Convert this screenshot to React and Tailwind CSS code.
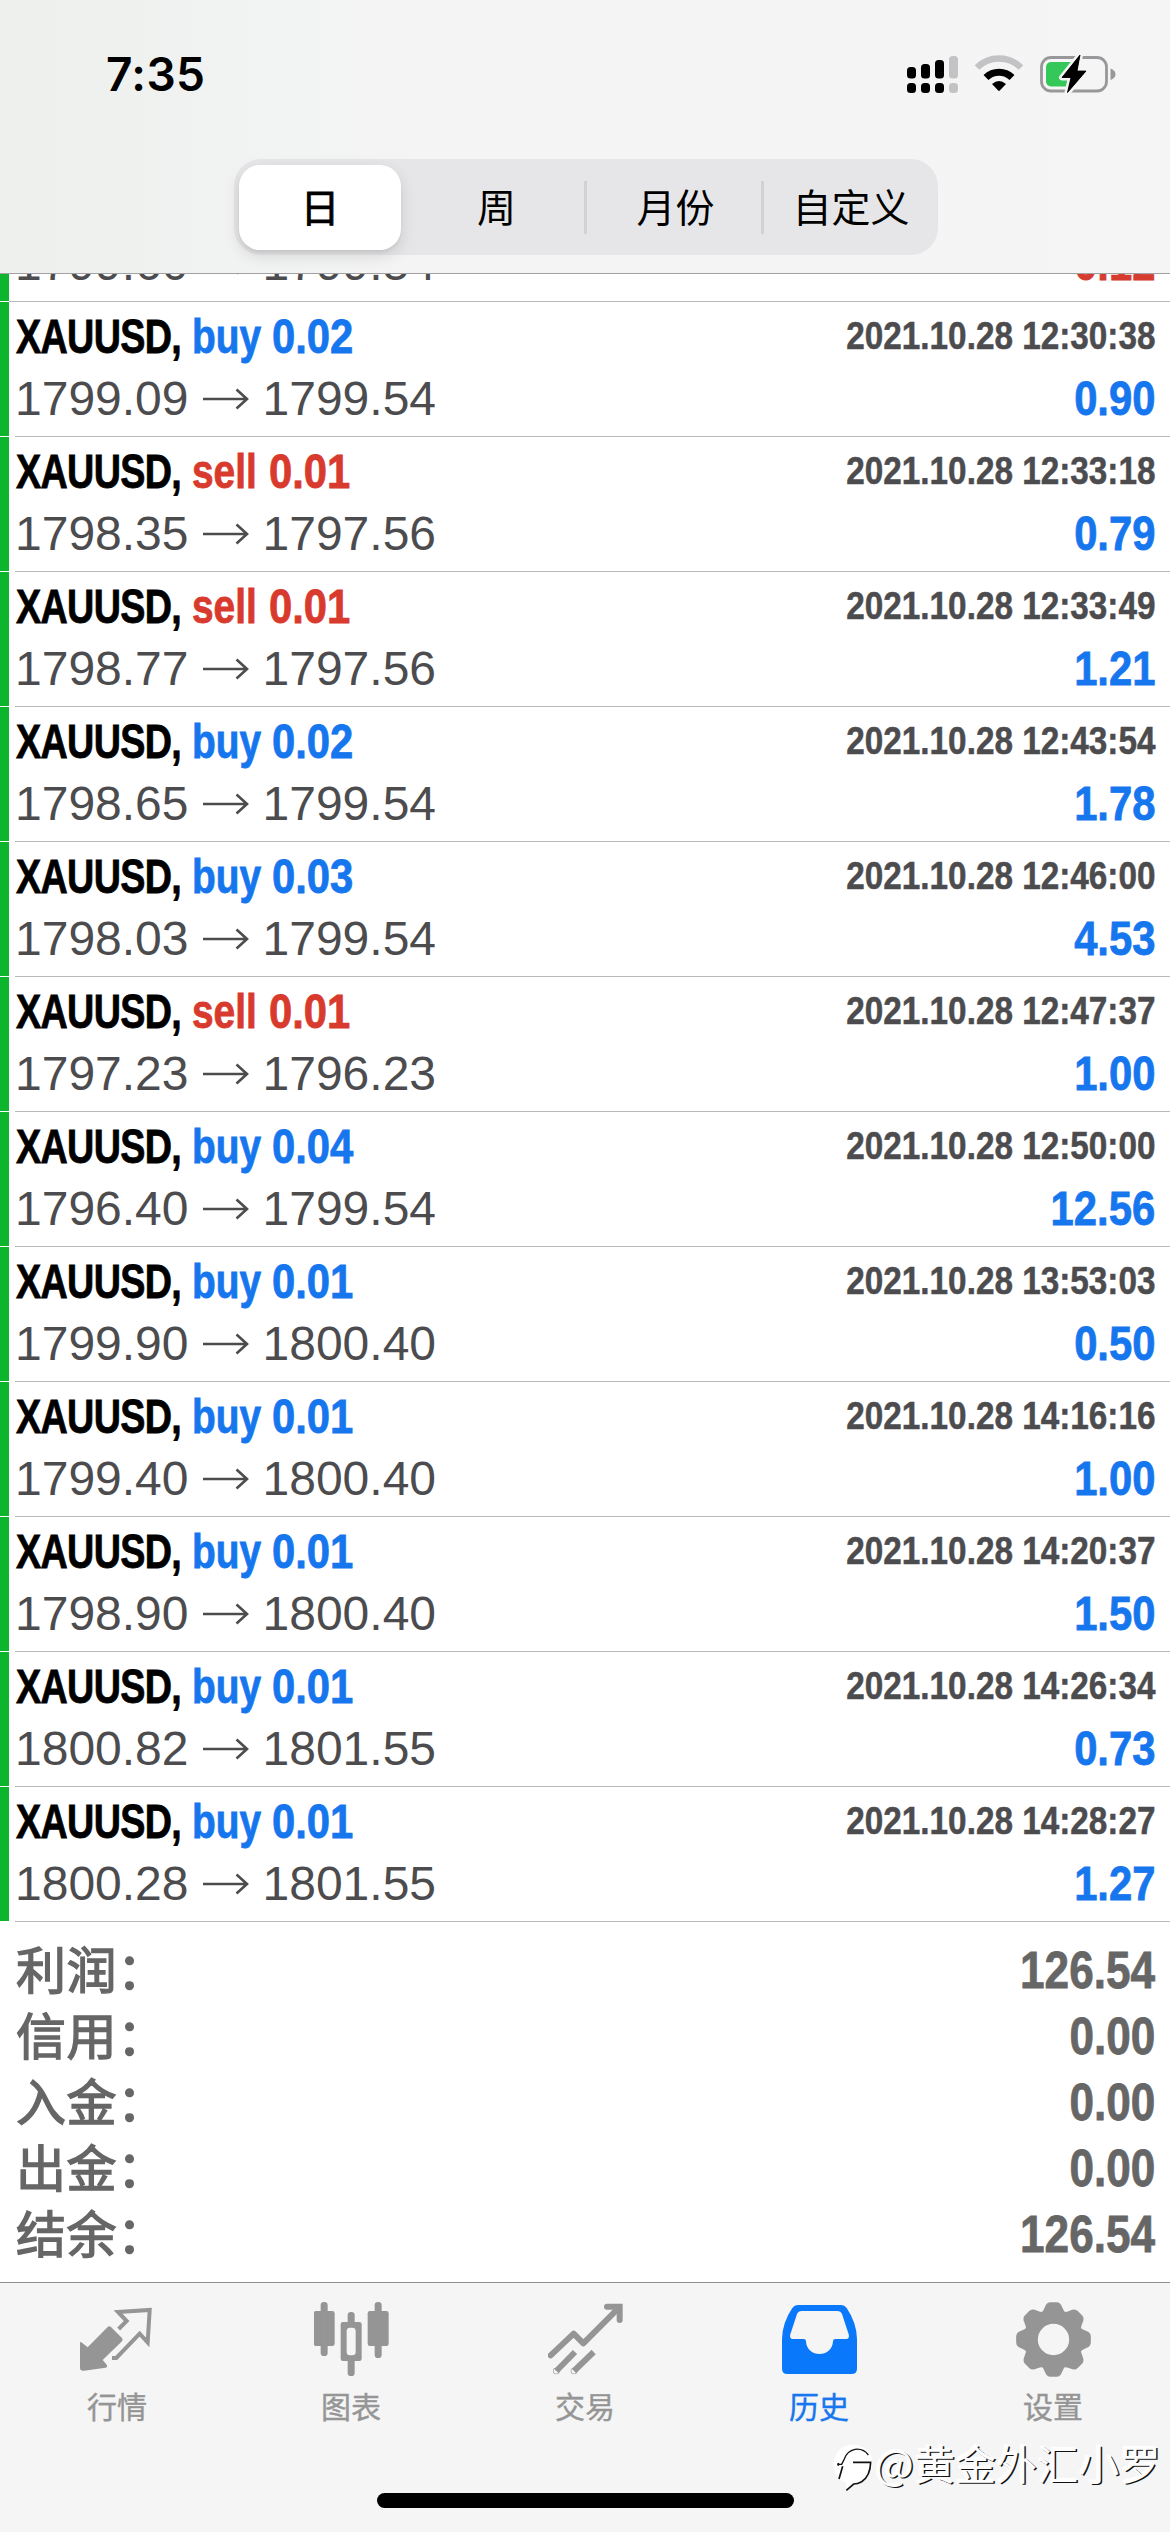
const TRADES = [
  ['buy', '0.02', '2021.10.28 12:30:38', '1799.09', '1799.54', '0.90'],
  ['sell', '0.01', '2021.10.28 12:33:18', '1798.35', '1797.56', '0.79'],
  ['sell', '0.01', '2021.10.28 12:33:49', '1798.77', '1797.56', '1.21'],
  ['buy', '0.02', '2021.10.28 12:43:54', '1798.65', '1799.54', '1.78'],
  ['buy', '0.03', '2021.10.28 12:46:00', '1798.03', '1799.54', '4.53'],
  ['sell', '0.01', '2021.10.28 12:47:37', '1797.23', '1796.23', '1.00'],
  ['buy', '0.04', '2021.10.28 12:50:00', '1796.40', '1799.54', '12.56'],
  ['buy', '0.01', '2021.10.28 13:53:03', '1799.90', '1800.40', '0.50'],
  ['buy', '0.01', '2021.10.28 14:16:16', '1799.40', '1800.40', '1.00'],
  ['buy', '0.01', '2021.10.28 14:20:37', '1798.90', '1800.40', '1.50'],
  ['buy', '0.01', '2021.10.28 14:26:34', '1800.82', '1801.55', '0.73'],
  ['buy', '0.01', '2021.10.28 14:28:27', '1800.28', '1801.55', '1.27'],
];

const TOTALS = [
  ['利润：', '126.54'],
  ['信用：', '0.00'],
  ['入金：', '0.00'],
  ['出金：', '0.00'],
  ['结余：', '126.54'],
];

const CJK = "font-['Noto_Sans_CJK_SC',sans-serif]";

function StatusIcons() {
  return (
    <svg width="210" height="44" viewBox="906 52 210 44" fill="none">
      <g fill="#000">
        <rect x="907" y="67" width="9" height="11.5" rx="3.5" />
        <rect x="921" y="64" width="9" height="14.5" rx="3.5" />
        <rect x="935" y="60" width="9" height="18.5" rx="3.5" />
        <rect x="907" y="83" width="9" height="10" rx="3.5" />
        <rect x="921" y="83" width="9" height="10" rx="3.5" />
        <rect x="935" y="83" width="9" height="10" rx="3.5" />
      </g>
      <g fill="#c3c3c5">
        <rect x="949" y="56" width="9" height="22.5" rx="3.5" />
        <rect x="949" y="83" width="9" height="10" rx="3.5" />
      </g>
      <path d="M977 67.5A31.500 31.500 0 0 1 1021 67.500" stroke="#c3c3c5" strokeWidth="6.500" />
      <path d="M986 77.500A18.500 18.500 0 0 1 1012 77.500" stroke="#000" strokeWidth="7" />
      <path d="M992 84Q999 78 1006 84L999.800 90.600Q999 91.300 998.200 90.600Z" fill="#000" />
      <rect x="1041.500" y="57.500" width="65" height="33.500" rx="9.500" stroke="#98989a" strokeWidth="2.800" />
      <path d="M1110.500 68.500C1113.500 69.500 1115.500 71.500 1115.500 74.300S1113.500 79 1110.500 80Z" fill="#98989a" />
      <rect x="1046" y="62" width="30" height="24.500" rx="5" fill="#34c759" />
      <path
        d="M1080 55L1062 77.500H1071L1067.500 92.500L1086 71H1077Z"
        fill="#000"
        stroke="#f5f5f6"
        strokeWidth="6"
        strokeLinejoin="round"
        paintOrder="stroke"
      />
      <path d="M1080 55L1062 77.500H1071L1067.500 92.500L1086 71H1077Z" fill="#000" stroke="#000" strokeWidth="0.8" strokeLinejoin="round" />
    </svg>
  );
}

function Header() {
  return (
    <header className="flex h-[274px] shrink-0 flex-col border-b border-[#a2a2a4] bg-linear-to-r from-[#edf0ed] via-[#f4f4f5] via-35% to-[#f5f5f6]">
      <div className="flex h-[159px] items-center justify-between pr-[54px] pl-[106px] pb-[11px]">
        <span className="font-['Inter',sans-serif] text-[46px] leading-none font-semibold tracking-[0.4px] text-black">7:35</span>
        <StatusIcons />
      </div>
      <div className={`ml-[234px] flex h-[96px] w-[704px] items-center rounded-[27px] bg-[#e6e6e8] px-[5px] text-[39px] text-black ${CJK}`}>
        <div className="flex h-[85px] w-[162px] items-center justify-center rounded-[21px] bg-white shadow-[0_6px_16px_rgba(0,0,0,0.12),0_2px_3px_rgba(0,0,0,0.06)] [-webkit-text-stroke:0.8px_#000]">
          <span className="-mt-1 leading-none">日</span>
        </div>
        <div className="flex h-[53px] w-[186px] items-center justify-center border-r-[3px] border-[#d2d2d4] pl-2">
          <span className="-mt-1 leading-none">周</span>
        </div>
        <div className="flex h-[53px] w-[177px] items-center justify-center border-r-[3px] border-[#d2d2d4] pl-[3px]">
          <span className="-mt-1 leading-none">月份</span>
        </div>
        <div className="flex h-[53px] flex-1 items-center justify-center pl-[5px]">
          <span className="-mt-1 leading-none">自定义</span>
        </div>
      </div>
    </header>
  );
}

function Arrow() {
  return (
    <svg className="mx-[13px] shrink-0" width="48" height="48" viewBox="0 5 48 48" fill="none" stroke="#4c4c4f" strokeWidth="2.600">
      <path d="M1 29H45M34.500 19.500L45 29L34.500 38.500" />
    </svg>
  );
}

function PriceLine({ open, close, profit }) {
  const color = profit.startsWith('-')
    ? 'text-[#d63b30] [-webkit-text-stroke:0.8px_#d63b30]'
    : 'text-[#1676ee] [-webkit-text-stroke:0.8px_#1676ee]';
  return (
    <div className="flex h-[54px] w-full items-center justify-between pr-[15px] pl-[5px] text-[48px] leading-none text-[#4c4c4f]">
      <div className="flex items-center">
        <span>{open}</span>
        <Arrow />
        <span>{close}</span>
      </div>
      <span className={`origin-right scale-x-[0.87] font-bold ${color}`}>{profit}</span>
    </div>
  );
}

function TradeRow({ trade }) {
  const [side, lots, time, open, close, profit] = trade;
  const buy = side === 'buy';
  return (
    <div className="flex h-[135px]">
      <div className="mb-px w-[9px] bg-[#0cb52c]" />
      <div className="ml-[6px] flex flex-1 flex-col border-b border-[#b9b9bb]">
        <div className="flex h-[70px] items-center justify-between pr-[15px] text-[48px] leading-none font-bold">
          <div
            className={`flex whitespace-nowrap ${
              buy
                ? 'text-[#1676ee] [-webkit-text-stroke:0.8px_#1676ee]'
                : 'text-[#d93a2e] [-webkit-text-stroke:0.8px_#d93a2e]'
            }`}
          >
            <span className="w-[177px] pl-px text-black [-webkit-text-stroke:0.8px_#000]">
              <span className="inline-block origin-left scale-x-[0.785] tracking-[-0.8px]">XAUUSD,</span>
            </span>
            <span className={buy ? 'w-[80px]' : 'w-[77px]'}>
              <span className="inline-block origin-left scale-x-[0.81]">{side}</span>
            </span>
            <span className="inline-block w-[82px] origin-left scale-x-[0.87]">{lots}</span>
          </div>
          <span className="-mt-[2px] origin-right scale-x-[0.865] text-[38.500px] text-[#4c4c4f] [-webkit-text-stroke:0.5px_#4c4c4f]">{time}</span>
        </div>
        <div className="-ml-[5px]">
          <PriceLine open={open} close={close} profit={profit} />
        </div>
      </div>
    </div>
  );
}

function QuotesIcon() {
  return (
    <svg width="75" height="75" viewBox="240 96 225 225" fill="#959595">
      <path d="M240 218Q241 214 246 218L263 232L323 171Q328 166 333 171L366 204Q370 209 366 214L308 270L320 284Q324 290 317 293L252 302Q240 303 240 294Z" />
      <path d="M356 177L380 153L354 126L449 120L443 217L419 191L349 264H336" fill="none" stroke="#959595" strokeWidth="12" />
    </svg>
  );
}

function ChartIcon() {
  return (
    <svg width="75" height="75" viewBox="940 96 225 225" fill="#959595">
      <rect x="939" y="123" width="63" height="105" rx="7" />
      <rect x="960" y="96" width="21" height="162" rx="10" />
      <rect x="1101" y="123" width="63" height="105" rx="7" />
      <rect x="1122" y="96" width="21" height="168" rx="10" />
      <rect x="1041" y="126" width="21" height="192" rx="10" />
      <rect x="1020" y="156" width="63" height="117" rx="7" />
      <rect x="1038" y="173" width="27" height="83" rx="10" fill="#f5f5f5" />
    </svg>
  );
}

function TradeIcon() {
  return (
    <svg width="75" height="75" viewBox="202 96 225 225" fill="none" stroke="#959595" strokeWidth="18">
      <path d="M210 256L279 191L308 220L412 116" strokeLinecap="round" strokeLinejoin="round" />
      <path d="M379 110.500H417V150" strokeLinecap="round" />
      <path d="M283 246L227 303M339 246L280 303" />
      <circle cx="227" cy="303" r="1" />
      <circle cx="280" cy="303" r="1" />
    </svg>
  );
}

function HistoryIcon() {
  return (
    <svg width="75" height="75" viewBox="33 36 225 225" fill="#0a78fb">
      <path
        fillRule="evenodd"
        d="M80 45H211Q221 45 227 54Q257 98 258 147V236Q258 252 242 252H49Q33 252 33 236V147Q34 98 64 54Q70 45 80 45ZM92 63Q82 63 78 72L58 133Q54 147 66 147H98Q105 147 105 154C107 205 184 205 186 154Q186 147 193 147H225Q237 147 233 133L213 72Q209 63 199 63Z"
      />
    </svg>
  );
}

function GearIcon() {
  return (
    <svg width="75" height="75" viewBox="-112.500 -112.500 225 225" fill="#959595">
      {[0, 45, 90, 135, 180, 225, 270, 315].map((angle) => (
        <path
          key={angle}
          transform={`rotate(${angle})`}
          d="M-42 -75Q-30 -84 -26 -97Q-21 -112 -9 -112H9Q21 -112 26 -97Q30 -84 42 -75L34 -60H-34Z"
        />
      ))}
      <circle r="67" fill="none" stroke="#959595" strokeWidth="40" />
    </svg>
  );
}

const TABS = [
  ['行情', QuotesIcon],
  ['图表', ChartIcon],
  ['交易', TradeIcon],
  ['历史', HistoryIcon],
  ['设置', GearIcon],
];

function Watermark() {
  return (
    <div className="absolute top-[2437px] left-[833px] flex items-center text-[#fdfdfd]">
      <svg width="42" height="60" viewBox="24 24 126 180" fill="none">
        <path d="M84 48C120 48 142 72 142 104C142 134 122 154 94 162L66 186L62 160C40 152 26 132 26 104C26 72 50 48 84 48Z" fill="#fff" />
        <path d="M37 106H50L58 90Q66 66 90 61Q116 58 130 78" stroke="#111" strokeWidth="4" />
        <path d="M53 112L42 150M40 102V110" stroke="#111" strokeWidth="5" />
        <path d="M84 100H137Q136 142 110 158Q98 165 86 165L64 184" stroke="#111" strokeWidth="5" />
      </svg>
      <span
        className={`-mt-[10px] text-[41px] leading-[52px] tracking-[0.1px] whitespace-nowrap [text-shadow:1.500px_1px_0_#111,-1px_-1px_0_#fff,0_0_3px_#fff] ${CJK}`}
      >
        @黄金外汇小罗
      </span>
    </div>
  );
}

export default function App() {
  return (
    <div className="relative flex h-[2532px] w-[1170px] flex-col overflow-hidden bg-white font-['Liberation_Sans',Arial,sans-serif]">
      <Header />
      <main className="flex-1">
        <div className="flex h-[28px] overflow-hidden">
          <div className="mb-px w-[9px] shrink-0 bg-[#0cb52c]" />
          <div className="flex flex-1 items-end border-b border-[#b9b9bb] pb-[10px] pl-px">
            <PriceLine open="1799.60" close="1799.54" profit="-0.12" />
          </div>
        </div>
        {TRADES.map((trade) => (
          <TradeRow key={trade[2]} trade={trade} />
        ))}
        <div className="pt-[15px] pr-[15px] pl-4 text-[#666]">
          {TOTALS.map(([label, value]) => (
            <div key={label} className="flex h-[66px] items-center justify-between leading-none">
              <span className={`-mt-[6px] text-[50px] tracking-[0.5px] [-webkit-text-stroke:1.4px_#666] ${CJK}`}>{label}</span>
              <span className="mt-px origin-right scale-x-[0.865] text-[51px] font-bold [-webkit-text-stroke:0.8px_#666]">{value}</span>
            </div>
          ))}
        </div>
      </main>
      <footer className="flex h-[250px] shrink-0 flex-col justify-between border-t border-[#8e8e90] bg-[#f5f5f5] pb-[24px]">
        <nav className="grid grid-cols-5 pt-[19px]">
          {TABS.map(([label, Icon]) => (
            <div
              key={label}
              className={`flex flex-col items-center ${label === '历史' ? 'text-[#1876ee]' : 'text-[#959595]'}`}
            >
              <Icon />
              <span className={`mt-[12px] text-[30px] leading-[32px] [-webkit-text-stroke:0.4px_currentColor] ${CJK}`}>{label}</span>
            </div>
          ))}
        </nav>
        <div className="h-[15px] w-[417px] self-center rounded-full bg-black" />
      </footer>
      <Watermark />
    </div>
  );
}
